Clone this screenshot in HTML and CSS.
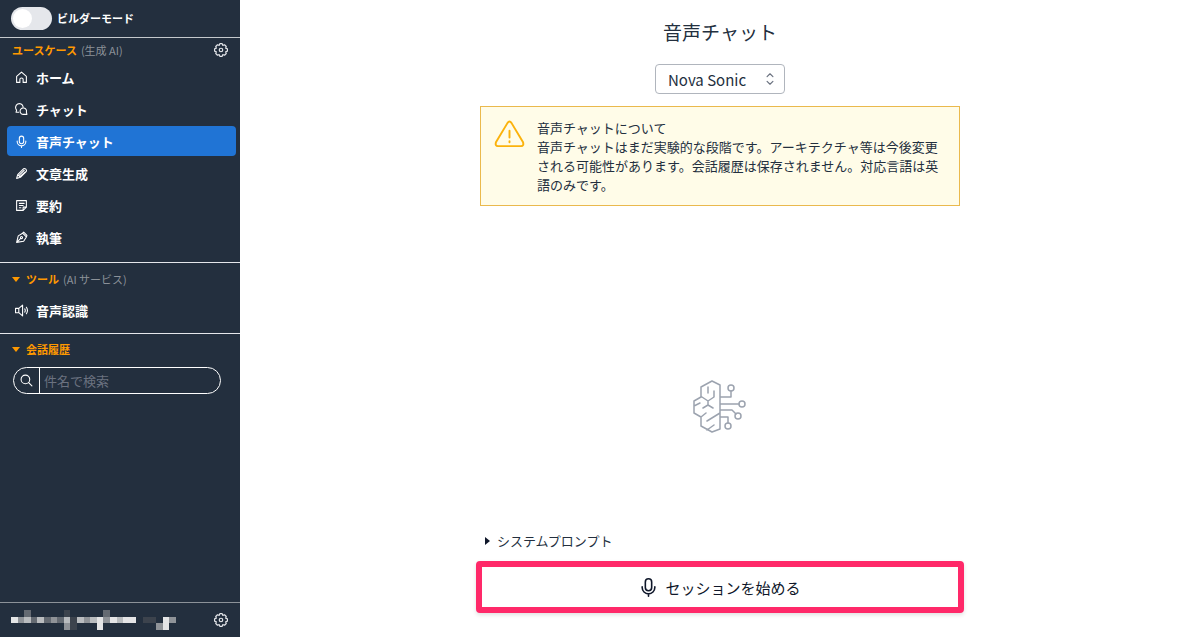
FILE: index.html
```html
<!DOCTYPE html>
<html lang="ja">
<head>
    <meta charset="UTF-8">
    <meta name="viewport" content="width=device-width, initial-scale=1.0">
    <title>音声チャット</title>
    <link rel="stylesheet" href="styles.css">
</head>
<body>

<!-- Shared gear icon -->
<svg class="defs" aria-hidden="true">
    <symbol id="icon-gear" viewBox="0 0 24 24">
        <path d="M10 1h4l1 3 3-1 3 3-1 3 3 1v4l-3 1 1 3-3 3-3-1-1 3h-4l-1-3-3 1-3-3 1-3-3-1v-4l3-1-1-3 3-3 3 1z"/>
        <circle cx="12" cy="12" r="3"/>
    </symbol>
</svg>

<div class="app">
    <aside class="sidebar">
        <div class="builder">
            <input type="checkbox" class="switch" id="builder-mode">
            <label for="builder-mode">ビルダーモード</label>
        </div>

        <section class="group usecases">
            <div class="group-title">
                <span><strong>ユースケース</strong>(生成 AI)</span>
                <button class="icon-button" type="button" aria-label="ユースケース設定"><svg class="gear"><use href="#icon-gear"/></svg></button>
            </div>
            <nav class="menu">
                <a href="#">
                    <svg viewBox="0 0 24 24"><path d="M3 21V10l9-8 9 8v11h-6v-6q0-2-3-2t-3 2v6z"/></svg>
                    ホーム
                </a>
                <a href="#">
                    <svg viewBox="0 0 24 24"><path d="M7 17H2l1-4a7 7 0 1 1 12-6"/><path d="M22 21h-6a6 6 0 1 1 5-4z"/></svg>
                    チャット
                </a>
                <a href="#" class="active">
                    <svg viewBox="0 0 24 24"><rect x="8" y="2" width="8" height="14" rx="4"/><path d="M4 11v1a8 8 0 0 0 16 0v-1M12 20v3"/></svg>
                    音声チャット
                </a>
                <a href="#">
                    <svg viewBox="0 0 24 24"><path d="M3 21l2-7L16 3q2-1 4 1t1 4L10 19zM5 14l5 5M8 15l9-9M10 17l9-8"/></svg>
                    文章生成
                </a>
                <a href="#">
                    <svg viewBox="0 0 24 24"><path d="M3 3h18v12l-6 6H3zM21 15h-6v6M8 8h9M8 12h7M8 16h3"/></svg>
                    要約
                </a>
                <a href="#">
                    <svg viewBox="0 0 24 24"><path d="M3 21L6 9l8-5 7 7-5 8zM3 21l8-8M14 4l2-2 6 6-1 3"/><circle cx="12" cy="12" r="2"/></svg>
                    執筆
                </a>
            </nav>
        </section>

        <section class="group tools">
            <div class="group-title">
                <span><i class="caret"></i><strong>ツール</strong>(AI サービス)</span>
            </div>
            <nav class="menu">
                <a href="#">
                    <svg viewBox="0 0 24 24"><path d="M1 8h6l7-6v20l-7-6H1zM7 8v8M18 9q2 3 0 6M21 6q4 6 0 12"/></svg>
                    音声認識
                </a>
            </nav>
        </section>

        <section class="group history">
            <div class="group-title">
                <span><i class="caret"></i><strong>会話履歴</strong></span>
            </div>
            <div class="search">
                <label for="search" aria-label="検索">
                    <svg viewBox="0 0 24 24"><circle cx="10" cy="10" r="8"/><path d="M16 16l6 6"/></svg>
                </label>
                <input type="text" id="search" placeholder="件名で検索">
            </div>
        </section>

        <div class="account">
            <!-- Masked user name -->
            <svg class="mask" viewBox="0 0 25 3" preserveAspectRatio="none" shape-rendering="crispEdges">
                <path fill="#646a72" d="M2 0h1v1h-1zM14 0h1v1h-1zM3 1h1v1h-1zM5 1h1v1h-1zM7 1h1v1h-1z"/>
                <path fill="#e4e5e6" d="M0 1h1v1h-1zM13 1h1v2h-1zM15 1h1v1h-1zM17 1h2v1h-2zM23 1h1v2h-1z"/>
                <path fill="#8f9398" d="M1 1h1v1h-1zM6 1h1v1h-1zM8 2h1v1h-1zM11 1h1v1h-1zM14 1h1v1h-1zM24 1h1v1h-1zM22 2h1v1h-1z"/>
                <path fill="#b9bcbf" d="M2 1h1v1h-1zM4 1h1v1h-1zM8 1h1v1h-1zM10 1h1v1h-1zM12 1h1v1h-1zM16 1h1v1h-1z"/>
                <path fill="#3c434d" d="M8 0h1v1h-1zM9 1h1v2h-1zM20 1h2v1h-2z"/>
            </svg>
            <button class="icon-button" type="button" aria-label="設定"><svg class="gear"><use href="#icon-gear"/></svg></button>
        </div>
    </aside>

    <main class="main">
        <h1>音声チャット</h1>

        <div class="model">
            <select aria-label="モデル">
                <option>Nova Sonic</option>
            </select>
            <svg viewBox="0 0 24 24"><path d="M7 8l5-5 5 5M7 16l5 5 5-5"/></svg>
        </div>

        <div class="alert">
            <svg viewBox="0 0 32 32"><path d="M14 4q2-3 4 0l12 20q1 4-2 4H4q-3 0-2-4zM16 12v7M16 23v1"/></svg>
            <div>
                <div>音声チャットについて</div>
                <div>音声チャットはまだ実験的な段階です。アーキテクチャ等は今後変更される可能性があります。会話履歴は保存されません。対応言語は英語のみです。</div>
            </div>
        </div>

        <div class="empty">
            <svg viewBox="0 0 54 54" stroke-width="1.5">
                <path d="M27 5L19 1 8 7v10L1 21v12l7 4v9l11 6 8-3zM15 7v6M21 11v6l-6 4-6-4M15 21v4M15 25l-5 3M15 25l5 3M1 26l6-3M8 37l5-4M14 41l13-8M14 50l7-5M27 17h11v-6M27 24h19M27 30h12l4 4M27 37h8v6"/>
                <circle cx="38" cy="8" r="3"/>
                <circle cx="49" cy="24" r="3"/>
                <circle cx="45" cy="36" r="3"/>
                <circle cx="35" cy="46" r="3"/>
            </svg>
        </div>

        <div class="bottom">
            <details>
                <summary><i class="caret"></i>システムプロンプト</summary>
            </details>
            <button class="start" type="button">
                <svg viewBox="0 0 24 24"><rect x="8" y="1" width="8" height="15" rx="4"/><path d="M4 11v1a8 8 0 0 0 16 0v-1M12 20v3"/></svg>
                セッションを始める
            </button>
        </div>
    </main>
</div>

</body>
</html>
```
FILE: styles.css
```css
* { box-sizing: border-box; }
body { margin: 0; font-family: "Noto Sans CJK JP", sans-serif; font-size: 13px; line-height: 19px; color: #232f3e; background: #fff; }
button, input, select { font: inherit; color: inherit; }
svg { fill: none; stroke: currentColor; stroke-linejoin: round; stroke-linecap: round; flex-shrink: 0; }
svg:not([stroke-width]) { stroke-width: 2; }
.defs { display: none; }
.app { display: flex; min-height: 100vh; }

/* Sidebar */
.sidebar { width: 240px; flex-shrink: 0; display: flex; flex-direction: column; background: #232f3e; color: #fff; }
.builder { display: flex; align-items: center; gap: 5px; height: 38px; padding: 0 11px; border-bottom: 1px solid #c4c8cc; font-size: 11px; font-weight: bold; }
.switch { appearance: none; width: 41px; height: 23px; margin: 0; padding: 2px; border-radius: 12px; background: #e5e7eb; }
.switch::before { content: ""; display: block; width: 19px; height: 19px; border-radius: 50%; background: #fff; }
.switch:checked::before { margin-left: auto; }

.group { border-bottom: 1px solid #e5e7eb; }
.group-title { display: flex; align-items: center; justify-content: space-between; height: 24px; padding: 0 12px; font-size: 11px; color: #8c9299; }
.group-title strong { margin-right: 4px; color: #f90; }
.group-title .caret { display: inline-block; margin: 0 6px 2px 0; border: 4px solid transparent; border-top: 5px solid #f90; border-bottom: 0; }
.usecases { padding-bottom: 8px; }
.tools { padding: 4px 0 6px; }
.tools .menu { padding-top: 4px; }
.history { padding-top: 3px; border-bottom: 0; }

.icon-button { display: flex; padding: 0; border: 0; background: none; color: #e5e7eb; }
.gear { width: 14px; height: 14px; }

.menu { padding: 0 4px 0 7px; }
.menu a { display: flex; align-items: center; gap: 8px; height: 30px; margin-bottom: 2px; padding: 0 8px; border-radius: 4px; color: #fff; font-weight: bold; text-decoration: none; }
.menu a.active { background: #2074d5; }
.menu svg { width: 13px; height: 13px; }

.search { display: flex; height: 27px; margin: 6px 19px 0 13px; border: 1px solid #fff; border-radius: 14px; overflow: hidden; }
.search label { display: flex; align-items: center; justify-content: center; width: 26px; border-right: 1px solid #fff; }
.search svg { width: 13px; height: 13px; }
.search input { flex: 1; min-width: 0; padding: 0 4px; border: 0; background: none; outline: 0; }
.search input::placeholder { color: #6b7280; }

.account { display: flex; align-items: center; justify-content: space-between; height: 35px; margin-top: auto; padding: 0 12px 0 11px; border-top: 1px solid #8c9299; }
.account .mask { width: 165px; height: 20px; stroke: none; }

/* Main area */
.main { flex: 1; display: flex; flex-direction: column; align-items: center; padding: 18px 24px 24px; }
h1 { margin: 0 0 18px; font-size: 19px; line-height: 28px; font-weight: normal; }

.model { display: grid; width: 130px; margin-bottom: 12px; }
.model select, .model svg { grid-area: 1 / 1; }
.model select { appearance: none; height: 30px; padding: 0 12px; border: 1px solid #b0b5bd; border-radius: 4px; background: #fff; font-size: 15px; }
.model svg { width: 14px; height: 14px; margin-right: 8px; place-self: center end; color: #6b7280; pointer-events: none; }

.alert { display: flex; gap: 12px; width: 100%; max-width: 480px; padding: 11px 14px 11px 13px; border: 1px solid #eab94d; background: #fffce8; }
.alert svg { width: 31px; height: 31px; margin-top: 1px; color: #fbb20c; }

.empty { flex: 1; display: flex; align-items: center; padding-top: 76px; color: #9ca3af; }
.empty svg { width: 54px; height: 54px; }

.bottom { width: 100%; max-width: 488px; }
summary { display: flex; align-items: center; padding-left: 9px; margin-bottom: 11px; list-style: none; }
summary .caret { margin-right: 7px; border: 4px solid transparent; border-left: 5px solid #0f172a; border-right: 0; }
.start { display: flex; align-items: center; justify-content: center; gap: 7px; width: 100%; height: 52px; border: 6px solid #ff2969; border-radius: 4px; background: #fff; color: #0f172a; font-size: 15px; box-shadow: 0 2px 4px rgba(0, 0, 0, 0.12); }
.start svg { width: 19px; height: 19px; }
```
